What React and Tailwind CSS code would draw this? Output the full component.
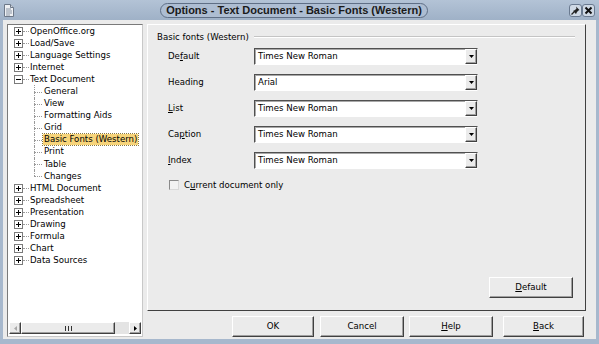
import React from 'react';

const topItems = ['OpenOffice.org', 'Load/Save', 'Language Settings', 'Internet'];
const children = ['General', 'View', 'Formatting Aids', 'Grid', 'Basic Fonts (Western)', 'Print', 'Table', 'Changes'];
const bottomItems = ['HTML Document', 'Spreadsheet', 'Presentation', 'Drawing', 'Formula', 'Chart', 'Data Sources'];

const fontRows = [
    { label: 'Default', pre: 'De', key: 'f', post: 'ault', value: 'Times New Roman' },
    { label: 'Heading', pre: '', key: '', post: 'Heading', value: 'Arial' },
    { label: 'List', pre: '', key: 'L', post: 'ist', value: 'Times New Roman' },
    { label: 'Caption', pre: 'Ca', key: 'p', post: 'tion', value: 'Times New Roman' },
    { label: 'Index', pre: '', key: 'I', post: 'ndex', value: 'Times New Roman' },
];

const raised = 'border border-t-white border-l-white border-r-[#404040] border-b-[#404040] shadow-[inset_-1px_-1px_0_#a0a0a0]';

const Expander = ({ open }) => (
    <svg width="9" height="9" viewBox="0 0 9 9" className="shrink-0" shapeRendering="crispEdges">
        <rect x="0.5" y="0.5" width="8" height="8" fill="#fff" stroke="#7b7b7b" />
        <line x1="2" y1="4.5" x2="7" y2="4.5" stroke="#000" />
        {!open && <line x1="4.5" y1="2" x2="4.5" y2="7" stroke="#000" />}
    </svg>
);

const TopRow = ({ label, open }) => (
    <div className="h-[12.1px] flex items-center pl-[6px]">
        <Expander open={open} />
        <div className="w-[6px] border-t border-dotted border-[#9a9a9a]" />
        <span className="ml-[1px] whitespace-nowrap">{label}</span>
    </div>
);

const ChildRow = ({ label, last, selected }) => (
    <div className="relative h-[12.1px] flex items-center pl-[35px]">
        <div className={`absolute left-[26px] top-0 border-l border-dotted border-[#9a9a9a] ${last ? 'h-1/2' : 'h-full'}`} />
        <div className="absolute left-[26px] top-1/2 w-[8px] border-t border-dotted border-[#9a9a9a]" />
        <span className={`whitespace-nowrap px-[1px] leading-[11px] ${selected ? 'bg-[#f7d47a] outline outline-1 outline-dotted outline-[#8a7a40]' : ''}`}>{label}</span>
    </div>
);

const Combo = ({ value }) => (
    <div className="w-[224px] h-[17px] flex bg-white border border-t-[#505050] border-l-[#505050] border-r-[#e8e8e8] border-b-white shadow-[inset_1px_1px_0_#a8a8a8]">
        <div className="flex-1 flex items-center pl-[3px] whitespace-nowrap">{value}</div>
        <div className={`w-[12px] h-full bg-[#ebebeb] flex items-center justify-center ${raised}`}>
            <svg width="5" height="3" viewBox="0 0 5 3"><path d="M0 0h5L2.5 3z" fill="#000" /></svg>
        </div>
    </div>
);

const Button = ({ w, children }) => (
    <div className={`${w} h-[21px] bg-[#ebebeb] flex items-center justify-center ${raised}`}>{children}</div>
);

export default function App() {
    return (
        <div className="w-[599px] h-[344px] bg-[#a7b8cd] flex flex-col font-['DejaVu_Sans',sans-serif] text-[8.6px] text-black overflow-hidden">
            {/* Title bar */}
            <div className="h-[20px] flex items-center relative px-[3px] bg-gradient-to-b from-[#b3c3d6] to-[#9fb1c7]">
                <svg width="12" height="13" viewBox="0 0 12 13">
                    <path d="M1.5 0.5h6l3 3v9h-9z" fill="#eef0f3" stroke="#6d7888" />
                    <path d="M7.5 0.5v3h3" fill="#d0d6de" stroke="#6d7888" />
                    <path d="M3 5h5M3 7h6M3 9h6M3 11h4" stroke="#8a96a6" />
                </svg>
                <div className="absolute left-[160px] top-[3px] w-[268px] h-[15px] rounded-full border border-[#5f6f86] bg-[#adbdd2] flex items-center justify-center font-['Liberation_Sans',sans-serif] font-bold text-[11px] text-[#1a1a1a] whitespace-nowrap">
                    Options - Text Document - Basic Fonts (Western)
                </div>
                <div className="ml-auto flex mr-[1px]">
                    <div className="w-[13px] h-[13px] rounded-[3px] border border-[#6a7a90] bg-[#cfd9e5] flex items-center justify-center">
                        <svg width="9" height="9" viewBox="0 0 9 9">
                            <path d="M5 0.5l3.5 3.5-1 0.5-1.5 1.5-1 2-3-3 2-1 1.5-1.5z" fill="#222" />
                            <path d="M3 6l-2.5 2.5" stroke="#222" strokeWidth="1.2" />
                        </svg>
                    </div>
                    <div className="w-[13px] h-[13px] rounded-[3px] border border-[#6a7a90] bg-[#cfd9e5] flex items-center justify-center">
                        <svg width="9" height="9" viewBox="0 0 9 9">
                            <path d="M1.5 1.5l6 6M7.5 1.5l-6 6" stroke="#111" strokeWidth="2" />
                        </svg>
                    </div>
                </div>
            </div>

            {/* Body */}
            <div className="flex-1 mx-[3px] mb-[5px] bg-[#ebebeb] flex pt-[4px] pl-[4px] pr-[10px] pb-[2px] gap-[4px]">
                {/* Tree */}
                <div className="w-[136px] bg-white flex flex-col border border-t-[#7a7a7a] border-l-[#7a7a7a] border-r-[#c8c8c8] border-b-[#c8c8c8]">
                    <div className="flex-1">
                        {topItems.map((t) => <TopRow key={t} label={t} />)}
                        <TopRow label="Text Document" open />
                        {children.map((c, i) => (
                            <ChildRow key={c} label={c} last={i === children.length - 1} selected={c === 'Basic Fonts (Western)'} />
                        ))}
                        {bottomItems.map((t) => <TopRow key={t} label={t} />)}
                    </div>
                    <div className="h-[12px] mx-[1px] mb-[2px] flex bg-[#e4e4e4]">
                        <div className={`w-[12px] bg-[#ebebeb] flex items-center justify-center ${raised}`}>
                            <svg width="3" height="5" viewBox="0 0 3 5"><path d="M3 0v5L0 2.5z" fill="#a8a8a8" /></svg>
                        </div>
                        <div className={`w-[94px] bg-[#ebebeb] flex items-center justify-center ${raised}`}>
                            <svg width="7" height="5" viewBox="0 0 7 5" shapeRendering="crispEdges"><path d="M0.5 0v5M3.5 0v5M6.5 0v5" stroke="#333" /></svg>
                        </div>
                        <div className="flex-1" />
                        <div className={`w-[12px] bg-[#ebebeb] flex items-center justify-center ${raised}`}>
                            <svg width="3" height="5" viewBox="0 0 3 5"><path d="M0 0v5L3 2.5z" fill="#000" /></svg>
                        </div>
                    </div>
                </div>

                {/* Right column */}
                <div className="flex-1 flex flex-col">
                    <div className="flex-1 flex flex-col border border-t-white border-l-white border-r-[#404040] border-b-[#404040] pt-[6px]">
                        <div className="h-[12px] flex items-center pl-[9px] pr-[10px]">
                            <span className="whitespace-nowrap">Basic fonts (Western)</span>
                            <div className="flex-1 ml-[5px] border-t border-[#c4c4c4] border-b border-b-white" />
                        </div>
                        <div className="mt-[5px] flex flex-col gap-[9px] pl-[20px]">
                            {fontRows.map((r) => (
                                <div key={r.label} className="flex items-center">
                                    <div className="w-[86px] whitespace-nowrap">
                                        {r.pre}<span className="underline">{r.key}</span>{r.post}
                                    </div>
                                    <Combo value={r.value} />
                                </div>
                            ))}
                        </div>
                        <div className="mt-[10px] ml-[21px] flex items-center">
                            <div className="w-[10px] h-[10px] bg-[#f2f2f2] border border-t-[#8a8a8a] border-l-[#8a8a8a] border-r-[#d8d8d8] border-b-[#d8d8d8]" />
                            <span className="ml-[5px] whitespace-nowrap">C<span className="underline">u</span>rrent document only</span>
                        </div>
                        <div className="mt-auto self-end mr-[12px] mb-[12px]">
                            <Button w="w-[84px]"><span className="underline">D</span>efault</Button>
                        </div>
                    </div>
                    <div className="mt-[5px] flex justify-end pr-[2px]">
                        <Button w="w-[82px]">OK</Button>
                        <div className="w-[6px]" />
                        <Button w="w-[84px]">Cancel</Button>
                        <div className="w-[5px]" />
                        <Button w="w-[84px]"><span className="underline">H</span>elp</Button>
                        <div className="w-[10px]" />
                        <Button w="w-[81px]"><span className="underline">B</span>ack</Button>
                    </div>
                </div>
            </div>
        </div>
    );
}
